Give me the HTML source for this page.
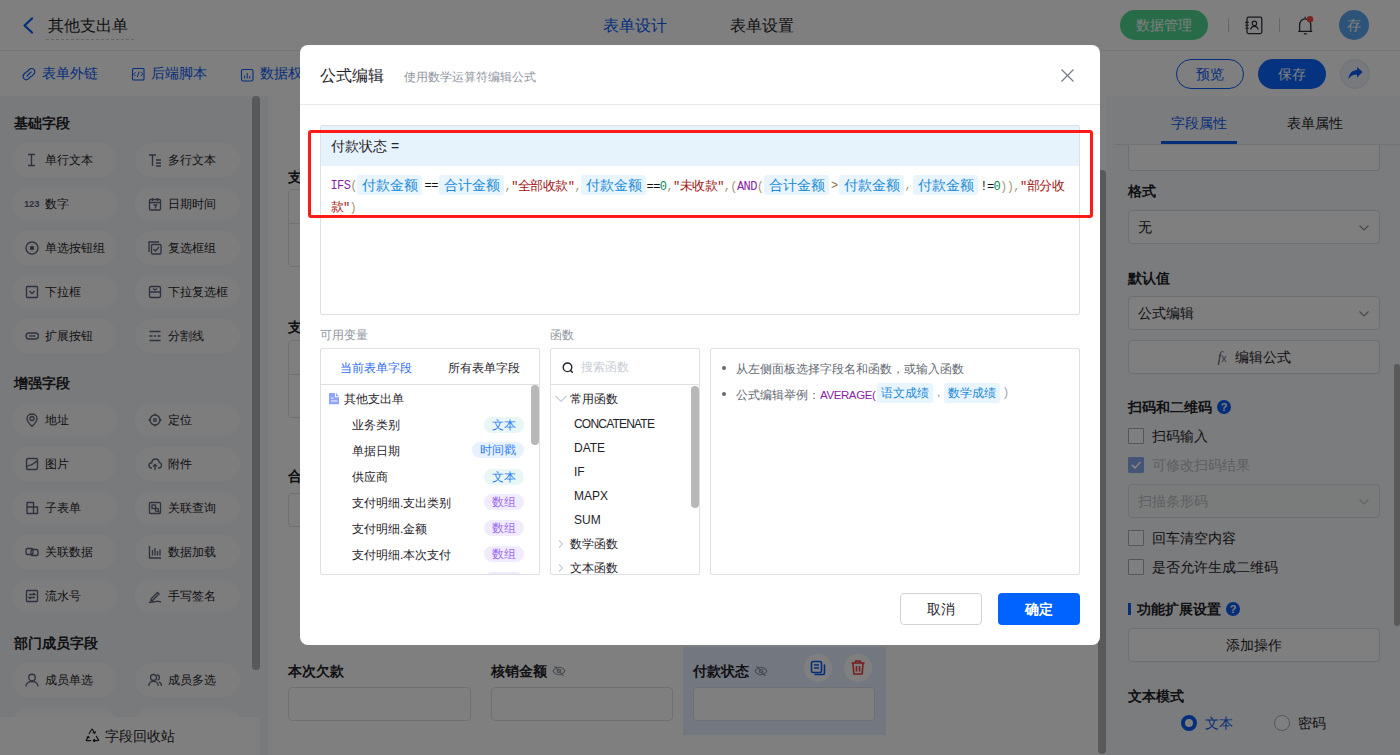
<!DOCTYPE html>
<html><head><meta charset="utf-8">
<style>
*{box-sizing:border-box;margin:0;padding:0}
html,body{width:1400px;height:755px;overflow:hidden;background:#fff;font-family:"Liberation Sans",sans-serif;color:#1f2329;font-size:14px}
.a{position:absolute;white-space:nowrap}
#page{position:absolute;left:0;top:0;width:1400px;height:755px}
#mask{position:absolute;left:0;top:0;width:1400px;height:755px;background:rgba(0,0,0,.5)}
#modal{position:absolute;left:300px;top:45px;width:800px;height:600px;background:#fff;border-radius:8px}
.mono{font-family:"Liberation Mono",monospace}
.fl{font-size:14px;font-weight:bold;color:#1f2329}
.inp{border:1px solid #dcdfe6;border-radius:4px;background:#fff}
.rl{font-size:14px;font-weight:bold;color:#1f2329}
.sel{width:252px;height:34px;border:1px solid #dcdfe6;border-radius:4px;background:#fff;padding-left:9px;font-size:14px;line-height:32px;color:#1f2329}
.chev{position:absolute;right:10px;top:14px}
.qm{width:14px;height:14px;border-radius:7px;background:#0a5cf5;color:#fff;font-size:11px;font-weight:bold;line-height:14px;text-align:center}
.cb{width:16px;height:16px;border:1px solid #a8adb8;border-radius:1px;background:#fff}
.chip{width:105px;height:34px;border-radius:17px;background:#fbfbfc}
.ct{font-size:12px;color:#1f2329}
.ic{stroke:#5b6478;fill:none;stroke-width:1.35}
.tg{height:20px;line-height:20px;padding:0 5px;background:#e8f4fe;color:#1a8ad6;font-size:14px;border-radius:3px;width:65px;text-align:center}
.fm{height:20px;line-height:20px;font-size:12px;letter-spacing:-0.6px;color:#000}
.fn{color:#8b1ea6}.pa{color:#a89878}.op{color:#111}.nu{color:#098658}.st{color:#a31515}.br{color:#8a6d3b}
.stc{color:#a31515;font-family:"Liberation Sans",sans-serif;font-size:13px;letter-spacing:-0.5px}
.tag{left:163px;width:40px;height:16px;line-height:16px;border-radius:8px;font-size:12px;text-align:center}
.tt{background:#e8f7f6;color:#2f7ff0}.tt2{background:#e8f1fe;color:#2f7ff0}.tp{background:#f1ecfd;color:#9d6cf0}
</style></head><body>
<div id="page">
  <!-- header -->
  <div class="a" style="left:0;top:0;width:1400px;height:51px;background:#fff;border-bottom:1px solid #ebedf0"></div>
  <svg class="a" style="left:22px;top:17px" width="12" height="17" viewBox="0 0 12 17"><path d="M10 1.5L2.5 8.5L10 15.5" stroke="#0a5cf5" stroke-width="2.2" fill="none" stroke-linecap="round" stroke-linejoin="round"/></svg>
  <div class="a" style="left:48px;top:16px;font-size:16px;color:#1f2329">其他支出单</div>
  <svg class="a" style="left:46px;top:39px" width="88" height="1"><line x1="0" y1="0.5" x2="88" y2="0.5" stroke="#c9cdd4" stroke-width="1" stroke-dasharray="3 2"/></svg>
  <div class="a" style="left:603px;top:16px;font-size:16px;color:#0a5cf5">表单设计</div>
  <div class="a" style="left:730px;top:16px;font-size:16px;color:#1f2329">表单设置</div>
  <div class="a" style="left:1120px;top:10px;width:88px;height:30px;border-radius:15px;background:#4fd692;color:#fff;font-size:14px;line-height:30px;text-align:center">数据管理</div>
  <div class="a" style="left:1228px;top:18px;width:1px;height:14px;background:#c9cdd4"></div>
  <svg class="a" style="left:1244px;top:16px" width="20" height="20" viewBox="0 0 20 20"><rect x="3" y="1.2" width="14.8" height="16.3" rx="1.5" stroke="#2b2f36" stroke-width="1.25" fill="none"/><path d="M1.2 6.4H4.8M1.2 9.3H4.8M1.2 12.3H4.8" stroke="#2b2f36" stroke-width="1.1"/><circle cx="10.4" cy="7.4" r="2.2" stroke="#2b2f36" stroke-width="1.2" fill="none"/><path d="M6.6 13.6C7 11.3 8.5 10.4 10.4 10.4S13.8 11.3 14.2 13.6" stroke="#2b2f36" stroke-width="1.2" fill="none"/></svg>
  <div class="a" style="left:1279px;top:18px;width:1px;height:14px;background:#c9cdd4"></div>
  <svg class="a" style="left:1296px;top:15px" width="20" height="20" viewBox="0 0 20 20"><path d="M8.6 2.3H9.8" stroke="#2b2f36" stroke-width="1.2"/><path d="M3.6 16.2V10.5C3.6 6.5 5.8 3.8 9.2 3.8S14.8 6.5 14.8 10.5V16.2M2.2 16.4H16.2" stroke="#2b2f36" stroke-width="1.3" fill="none" stroke-linejoin="round"/><path d="M7.8 18.8H10.8" stroke="#2b2f36" stroke-width="1.2"/><circle cx="14" cy="4.2" r="3.2" fill="#f54a45"/></svg>
  <div class="a" style="left:1339px;top:10px;width:30px;height:30px;border-radius:15px;background:#5aa6f0;color:#fff;font-size:14px;line-height:30px;text-align:center">存</div>
  <!-- toolbar -->
  <div class="a" style="left:0;top:51px;width:1400px;height:45px;background:#fff"></div>
  <svg class="a" style="left:22px;top:67px" width="14" height="14" viewBox="0 0 14 14"><path d="M5.2 4.6L7.3 2.5C8.6 1.2 10.7 1.2 11.9 2.4S13.1 5.8 11.8 7.1L9.6 9.3M8.6 9.6L6.6 11.6C5.3 12.9 3.2 12.9 2 11.7S0.8 8.3 2.1 7L4.2 4.9M4.9 9.1L9 5" stroke="#0a5cf5" stroke-width="1.2" fill="none" stroke-linecap="round"/></svg>
  <div class="a" style="left:42px;top:65px;font-size:14px;color:#0a5cf5">表单外链</div>
  <svg class="a" style="left:131px;top:67px" width="14" height="14" viewBox="0 0 14 14"><rect x="1.5" y="1.5" width="11.5" height="11.5" rx="1" stroke="#0a5cf5" stroke-width="1.1" fill="none"/><path d="M4.6 5.2L2.6 7.2L4.6 9.2M9.9 5.2L11.9 7.2L9.9 9.2M8.2 4.5L6.3 10" stroke="#0a5cf5" stroke-width="1" fill="none"/></svg>
  <div class="a" style="left:151px;top:65px;font-size:14px;color:#0a5cf5">后端脚本</div>
  <svg class="a" style="left:240px;top:68px" width="14" height="14" viewBox="0 0 14 14"><rect x="1.5" y="1.5" width="11.5" height="11.5" rx="1.5" stroke="#0a5cf5" stroke-width="1.1" fill="none"/><path d="M4.7 10.5V7.5M7.2 10.5V5M9.7 10.5V8" stroke="#0a5cf5" stroke-width="1"/></svg>
  <div class="a" style="left:260px;top:65px;font-size:14px;color:#0a5cf5">数据权限</div>
  <div class="a" style="left:1176px;top:59px;width:68px;height:30px;border:1px solid #0a5cf5;border-radius:15px;color:#0a5cf5;font-size:14px;line-height:28px;text-align:center">预览</div>
  <div class="a" style="left:1258px;top:59px;width:68px;height:30px;border-radius:15px;background:#0a66ff;color:#fff;font-size:14px;line-height:30px;text-align:center">保存</div>
  <div class="a" style="left:1340px;top:59px;width:30px;height:30px;border-radius:15px;background:#eef2fb;border:1px solid #dfe5f0"></div>
  <svg class="a" style="left:1347px;top:65px" width="17" height="17" viewBox="0 0 17 17"><path d="M15.5 7L10 2V5C5 5.3 2 8.5 1.5 14C3.5 11 6.5 9.5 10 9.6V12.5Z" fill="#0a5cf5"/></svg>
  <!-- left panel -->
  <div class="a" style="left:0;top:96px;width:268px;height:659px;background:#f3f4f7"></div>
  <div class="a" style="left:252px;top:96px;width:8px;height:574px;border-radius:4px;background:#b0b0b0"></div>
  <div class="a rl" style="left:14px;top:115px">基础字段</div>
  <div class="a rl" style="left:14px;top:375px">增强字段</div>
  <div class="a rl" style="left:14px;top:635px">部门成员字段</div>
  <div class="a chip" style="left:12px;top:143px"></div>
  <svg class="a ic" style="left:25px;top:153px" width="14" height="14" viewBox="0 0 14 14"><path d="M3 1.5H10M3 12.5H10M6.5 1.5V12.5"/></svg>
  <div class="a ct" style="left:45px;top:152px">单行文本</div>
  <div class="a chip" style="left:135px;top:143px"></div>
  <svg class="a ic" style="left:148px;top:153px" width="14" height="14" viewBox="0 0 14 14"><path d="M1 2H8M4.5 2V13M8 7H13M8 10H13M8 13H13" /></svg>
  <div class="a ct" style="left:168px;top:152px">多行文本</div>
  <div class="a chip" style="left:12px;top:187px"></div>
  <div class="a" style="left:24px;top:198px;font-size:9.5px;font-weight:bold;color:#5b6478;letter-spacing:-0.2px">123</div>
  <div class="a ct" style="left:45px;top:196px">数字</div>
  <div class="a chip" style="left:135px;top:187px"></div>
  <svg class="a ic" style="left:148px;top:197px" width="14" height="14" viewBox="0 0 14 14"><rect x="1.5" y="2.5" width="11" height="10.5" rx="1"/><path d="M1.5 5.5H12.5M4.5 1V4M9.5 1V4M5.5 8H8.5L7 11.5"/></svg>
  <div class="a ct" style="left:168px;top:196px">日期时间</div>
  <div class="a chip" style="left:12px;top:231px"></div>
  <svg class="a ic" style="left:25px;top:241px" width="14" height="14" viewBox="0 0 14 14"><circle cx="7" cy="7" r="6"/><circle cx="7" cy="7" r="1.6" fill="#5b6478"/></svg>
  <div class="a ct" style="left:45px;top:240px">单选按钮组</div>
  <div class="a chip" style="left:135px;top:231px"></div>
  <svg class="a ic" style="left:148px;top:241px" width="14" height="14" viewBox="0 0 14 14"><rect x="3.5" y="3.5" width="9.5" height="9.5" rx="1"/><path d="M1 11V1H11M5.5 8L7.5 10L11 6"/></svg>
  <div class="a ct" style="left:168px;top:240px">复选框组</div>
  <div class="a chip" style="left:12px;top:275px"></div>
  <svg class="a ic" style="left:25px;top:285px" width="14" height="14" viewBox="0 0 14 14"><rect x="1.5" y="1.5" width="11" height="11" rx="1"/><path d="M4.5 6L7 8.5L9.5 6"/></svg>
  <div class="a ct" style="left:45px;top:284px">下拉框</div>
  <div class="a chip" style="left:135px;top:275px"></div>
  <svg class="a ic" style="left:148px;top:285px" width="14" height="14" viewBox="0 0 14 14"><rect x="1.5" y="1.5" width="11" height="11" rx="1.5"/><path d="M1.5 7H12.5M5 3.5L7 5L9 3.5"/></svg>
  <div class="a ct" style="left:168px;top:284px">下拉复选框</div>
  <div class="a chip" style="left:12px;top:319px"></div>
  <svg class="a ic" style="left:25px;top:329px" width="14" height="14" viewBox="0 0 14 14"><rect x="1" y="4" width="12.5" height="6" rx="3"/><path d="M4 7H10.5"/></svg>
  <div class="a ct" style="left:45px;top:328px">扩展按钮</div>
  <div class="a chip" style="left:135px;top:319px"></div>
  <svg class="a ic" style="left:148px;top:329px" width="14" height="14" viewBox="0 0 14 14"><path d="M1.5 2.5H12.5M1.5 7H4.5M6 7H8M9.5 7H12.5M1.5 11.5H12.5"/></svg>
  <div class="a ct" style="left:168px;top:328px">分割线</div>
  <div class="a chip" style="left:12px;top:403px"></div>
  <svg class="a ic" style="left:25px;top:413px" width="14" height="14" viewBox="0 0 14 14"><path d="M7 13.5C7 13.5 2 8.5 2 5.5C2 2.8 4.2 1 7 1S12 2.8 12 5.5C12 8.5 7 13.5 7 13.5Z"/><circle cx="7" cy="5.5" r="2"/></svg>
  <div class="a ct" style="left:45px;top:412px">地址</div>
  <div class="a chip" style="left:135px;top:403px"></div>
  <svg class="a ic" style="left:148px;top:413px" width="14" height="14" viewBox="0 0 14 14"><circle cx="7" cy="7" r="5"/><circle cx="7" cy="7" r="1.4"/><path d="M7 0.5V2.5M7 11.5V13.5M0.5 7H2.5M11.5 7H13.5"/></svg>
  <div class="a ct" style="left:168px;top:412px">定位</div>
  <div class="a chip" style="left:12px;top:447px"></div>
  <svg class="a ic" style="left:25px;top:457px" width="14" height="14" viewBox="0 0 14 14"><rect x="1.5" y="1.5" width="11" height="11" rx="1.5"/><path d="M1.5 10C4 7 5.5 9 8 7S11 4.5 12.5 4M4 4.5V4.6"/></svg>
  <div class="a ct" style="left:45px;top:456px">图片</div>
  <div class="a chip" style="left:135px;top:447px"></div>
  <svg class="a ic" style="left:148px;top:457px" width="14" height="14" viewBox="0 0 14 14"><path d="M4 11H3.5C2 11 1 9.8 1 8.3S2.2 5.7 3.7 5.7C4 3.5 5.5 2 7.5 2S11 3.5 11.3 5.7C12.5 5.8 13.5 6.9 13.5 8.3S12.5 11 11 11H10M7 13V7.5M5 9.5L7 7.5L9 9.5"/></svg>
  <div class="a ct" style="left:168px;top:456px">附件</div>
  <div class="a chip" style="left:12px;top:491px"></div>
  <svg class="a ic" style="left:25px;top:501px" width="14" height="14" viewBox="0 0 14 14"><path d="M2 1.5H8.5V6H12.5V12.5H2ZM2 6H8.5V12.5"/></svg>
  <div class="a ct" style="left:45px;top:500px">子表单</div>
  <div class="a chip" style="left:135px;top:491px"></div>
  <svg class="a ic" style="left:148px;top:501px" width="14" height="14" viewBox="0 0 14 14"><rect x="1.5" y="1.5" width="11" height="11" rx="1"/><rect x="4" y="4" width="3.5" height="3.5"/><circle cx="8.8" cy="8.8" r="1.6"/><path d="M10 10L11.5 11.5"/></svg>
  <div class="a ct" style="left:168px;top:500px">关联查询</div>
  <div class="a chip" style="left:12px;top:535px"></div>
  <svg class="a ic" style="left:25px;top:545px" width="14" height="14" viewBox="0 0 14 14"><rect x="1" y="3.5" width="7" height="6" rx="1.5"/><rect x="6" y="4.5" width="7" height="6" rx="1.5"/></svg>
  <div class="a ct" style="left:45px;top:544px">关联数据</div>
  <div class="a chip" style="left:135px;top:535px"></div>
  <svg class="a ic" style="left:148px;top:545px" width="14" height="14" viewBox="0 0 14 14"><path d="M1.5 1V13H13M4.5 5V10.5M7 3V10.5M9.5 6V10.5M12 4.5V10.5"/></svg>
  <div class="a ct" style="left:168px;top:544px">数据加载</div>
  <div class="a chip" style="left:12px;top:579px"></div>
  <svg class="a ic" style="left:25px;top:589px" width="14" height="14" viewBox="0 0 14 14"><rect x="1.5" y="1.5" width="11" height="11" rx="1"/><path d="M4 5.5H10L8.3 4M10 8.5H4L5.7 10"/></svg>
  <div class="a ct" style="left:45px;top:588px">流水号</div>
  <div class="a chip" style="left:135px;top:579px"></div>
  <svg class="a ic" style="left:148px;top:589px" width="14" height="14" viewBox="0 0 14 14"><path d="M3 10L9.5 3.5L11 5L4.5 11.5H3V10ZM1 13.5C4 12.5 6 13.5 8 12.5C9.5 11.8 11 12.5 13 13"/></svg>
  <div class="a ct" style="left:168px;top:588px">手写签名</div>
  <div class="a chip" style="left:12px;top:663px"></div>
  <svg class="a ic" style="left:25px;top:673px" width="14" height="14" viewBox="0 0 14 14"><circle cx="7" cy="4.5" r="3.3"/><path d="M1 13.5C1 10.3 3.7 8.5 7 8.5S13 10.3 13 13.5"/></svg>
  <div class="a ct" style="left:45px;top:672px">成员单选</div>
  <div class="a chip" style="left:135px;top:663px"></div>
  <svg class="a ic" style="left:148px;top:673px" width="14" height="14" viewBox="0 0 14 14"><circle cx="5.5" cy="4.5" r="3"/><path d="M0.8 13C0.8 10.2 3 8.3 5.5 8.3S10.2 10.2 10.2 13M9 1.8C10.5 2 11.5 3.1 11.5 4.5C11.5 5.7 10.7 6.8 9.5 7.1M11 8.8C12.6 9.5 13.5 11 13.5 13"/></svg>
  <div class="a ct" style="left:168px;top:672px">成员多选</div>
  <div class="a chip" style="left:12px;top:707px"></div>
  <div class="a ct" style="left:45px;top:716px">部门单选</div>
  <div class="a chip" style="left:135px;top:707px"></div>
  <div class="a ct" style="left:168px;top:716px">部门多选</div>
  <div class="a" style="left:0;top:717px;width:260px;height:38px;background:#fff"></div>
  <svg class="a" style="left:85px;top:728px" width="15" height="14" viewBox="0 0 15 14"><path d="M4.2 5.5L6.8 1.2Q7 0.9 7.3 1.2L9.6 5M8.3 4.6L9.8 5.3L10.3 3.8M11.3 8.2L13.6 12.1Q13.8 12.6 13.2 12.6H8.2M9.6 11.3L8.2 12.6L9.6 13.8M5.6 12.6H1.6Q1 12.6 1.3 12.1L3.3 8.7M2.1 9.2L3.4 8.5L4.1 9.8" stroke="#1f2329" stroke-width="1.2" fill="none" stroke-linecap="round" stroke-linejoin="round"/></svg>
  <div class="a" style="left:105px;top:728px;font-size:14px;color:#1f2329">字段回收站</div>
  <!-- canvas -->
  <div class="a" style="left:268px;top:96px;width:832px;height:659px;background:#fff"></div>
  <div class="a fl" style="left:288px;top:168.8px">支付明细</div>
  <div class="a" style="left:288px;top:189px;width:400px;height:78px;border:1px solid #e0e2e6;border-radius:4px"></div>
  <div class="a" style="left:288px;top:223px;width:400px;height:1px;background:#e0e2e6"></div>
  <div class="a fl" style="left:288px;top:319px">支出明细</div>
  <div class="a" style="left:288px;top:340px;width:400px;height:78px;border:1px solid #e0e2e6;border-radius:4px"></div>
  <div class="a" style="left:288px;top:374px;width:400px;height:1px;background:#e0e2e6"></div>
  <div class="a fl" style="left:288px;top:468px">合计金额</div>
  <div class="a inp" style="left:288px;top:493px;width:182px;height:34px"></div>
  <div class="a fl" style="left:288px;top:663px">本次欠款</div>
  <div class="a inp" style="left:288px;top:687px;width:183px;height:34px"></div>
  <div class="a fl" style="left:491px;top:663px">核销金额</div>
  <svg class="a eye" style="left:552px;top:664px" width="14" height="14" viewBox="0 0 14 14"><path d="M1 7C2.5 4.5 4.5 3.3 7 3.3S11.5 4.5 13 7C11.5 9.5 9.5 10.7 7 10.7S2.5 9.5 1 7Z" stroke="#8f959e" stroke-width="1.1" fill="none"/><circle cx="7" cy="7" r="1.8" stroke="#8f959e" stroke-width="1.1" fill="none"/><path d="M2.5 2L11.5 12" stroke="#8f959e" stroke-width="1.1"/></svg>
  <div class="a inp" style="left:491px;top:687px;width:182px;height:34px"></div>
  <div class="a" style="left:683px;top:647px;width:203px;height:88px;background:#e7efff"></div>
  <div class="a fl" style="left:693px;top:663px">付款状态</div>
  <svg class="a eye" style="left:754px;top:664px" width="14" height="14" viewBox="0 0 14 14"><path d="M1 7C2.5 4.5 4.5 3.3 7 3.3S11.5 4.5 13 7C11.5 9.5 9.5 10.7 7 10.7S2.5 9.5 1 7Z" stroke="#8f959e" stroke-width="1.1" fill="none"/><circle cx="7" cy="7" r="1.8" stroke="#8f959e" stroke-width="1.1" fill="none"/><path d="M2.5 2L11.5 12" stroke="#8f959e" stroke-width="1.1"/></svg>
  <div class="a" style="left:804px;top:654px;width:28px;height:28px;border-radius:14px;background:#fff"></div>
  <svg class="a" style="left:810px;top:660px" width="16" height="16" viewBox="0 0 16 16"><rect x="1.5" y="1.5" width="10" height="11" rx="1.5" stroke="#0a5cf5" stroke-width="1.6" fill="none"/><path d="M4 5H9M4 8H9" stroke="#0a5cf5" stroke-width="1.5"/><path d="M14.5 4.5V13C14.5 14 14 14.5 13 14.5H4.5" stroke="#0a5cf5" stroke-width="1.6" fill="none"/></svg>
  <div class="a" style="left:844px;top:654px;width:28px;height:28px;border-radius:14px;background:#fff"></div>
  <svg class="a" style="left:850px;top:659px" width="16" height="17" viewBox="0 0 16 17"><path d="M1.5 4H14.5M5.5 4V2H10.5V4M3 4L3.8 15H12.2L13 4M6.5 7V12.5M9.5 7V12.5" stroke="#f03a3a" stroke-width="1.6" fill="none" stroke-linejoin="round"/></svg>
  <div class="a inp" style="left:693px;top:687px;width:182px;height:34px"></div>
  <!-- canvas scrollbar -->
  <div class="a" style="left:1098px;top:170px;width:8px;height:584px;border-radius:4px;background:#b2b2b2"></div>
  <!-- right panel -->
  <div class="a" style="left:1106px;top:96px;width:294px;height:659px;background:#f7f8fa"></div>
    <div class="a" style="left:1128px;top:136px;width:252px;height:35px;border:1px solid #dcdfe6;border-top:none;border-radius:0 0 4px 4px;background:#fff"></div>
  <div class="a" style="left:1114px;top:96px;width:286px;height:48px;background:#f7f8fa"></div>
  <div class="a" style="left:1114px;top:144px;width:286px;height:1px;background:#e5e6eb"></div>
  <div class="a" style="left:1161px;top:141px;width:76px;height:3px;background:#0a5cf5"></div>
  <div class="a" style="left:1171px;top:115px;font-size:14px;color:#0a5cf5">字段属性</div>
  <div class="a" style="left:1287px;top:115px;font-size:14px;color:#1f2329">表单属性</div>

  <div class="a rl" style="left:1128px;top:183px">格式</div>
  <div class="a sel" style="left:1128px;top:210px">无<svg class="chev" width="10" height="6" viewBox="0 0 10 6"><path d="M0.5 0.5L5 5L9.5 0.5" stroke="#8f959e" stroke-width="1.2" fill="none"/></svg></div>
  <div class="a rl" style="left:1128px;top:269.5px">默认值</div>
  <div class="a sel" style="left:1128px;top:296px">公式编辑<svg class="chev" width="10" height="6" viewBox="0 0 10 6"><path d="M0.5 0.5L5 5L9.5 0.5" stroke="#8f959e" stroke-width="1.2" fill="none"/></svg></div>
  <div class="a sel" style="left:1128px;top:340px;text-align:center;padding:0"><span style="font-family:'Liberation Serif',serif;font-style:italic;font-size:15px;color:#646a73">f</span><span style="font-size:10px;color:#646a73;margin-right:8px">x</span>编辑公式</div>
  <div class="a rl" style="left:1128px;top:399px">扫码和二维码</div>
  <div class="a qm" style="left:1217px;top:400px">?</div>
  <div class="a cb" style="left:1128px;top:428px"></div>
  <div class="a" style="left:1152px;top:428px;font-size:14px;color:#1f2329">扫码输入</div>
  <div class="a cb" style="left:1128px;top:457px;background:#8aaaf0;border-color:#8aaaf0"><svg width="14" height="14" viewBox="0 0 14 14" style="position:absolute;left:0;top:0"><path d="M3 7L6 10L11.5 4" stroke="#fff" stroke-width="1.8" fill="none"/></svg></div>
  <div class="a" style="left:1152px;top:457px;font-size:14px;color:#bbbfc4">可修改扫码结果</div>
  <div class="a sel" style="left:1128px;top:484px;background:#f5f6f7;color:#bbbfc4">扫描条形码<svg class="chev" width="10" height="6" viewBox="0 0 10 6"><path d="M0.5 0.5L5 5L9.5 0.5" stroke="#c9cdd4" stroke-width="1.2" fill="none"/></svg></div>
  <div class="a cb" style="left:1128px;top:530px"></div>
  <div class="a" style="left:1152px;top:530px;font-size:14px;color:#1f2329">回车清空内容</div>
  <div class="a cb" style="left:1128px;top:559px"></div>
  <div class="a" style="left:1152px;top:559px;font-size:14px;color:#1f2329">是否允许生成二维码</div>
  <div class="a" style="left:1128px;top:603px;width:3px;height:12px;background:#0a5cf5"></div>
  <div class="a rl" style="left:1137px;top:601px">功能扩展设置</div>
  <div class="a qm" style="left:1226px;top:602px">?</div>
  <div class="a sel" style="left:1128px;top:628px;text-align:center;padding:0">添加操作</div>
  <div class="a rl" style="left:1128px;top:687.5px">文本模式</div>
  <div class="a" style="left:1181px;top:715px;width:16px;height:16px;border-radius:8px;border:4px solid #0a5cf5;background:#fff"></div>
  <div class="a" style="left:1205px;top:715px;font-size:14px;color:#0a5cf5">文本</div>
  <div class="a" style="left:1274px;top:715px;width:16px;height:16px;border-radius:8px;border:1px solid #a8adb8;background:#fff"></div>
  <div class="a" style="left:1298px;top:715px;font-size:14px;color:#1f2329">密码</div>
  <div class="a" style="left:1394px;top:364px;width:6px;height:262px;border-radius:3px;background:#b2b2b2"></div>
</div>

<div id="mask"></div>
<div id="modal">
  <div class="a" style="left:20px;top:21px;font-size:16px;color:#1f2329">公式编辑</div>
  <div class="a" style="left:104px;top:24px;font-size:12px;color:#8f959e">使用数学运算符编辑公式</div>
  <svg class="a" style="left:761px;top:24px" width="13" height="13" viewBox="0 0 13 13"><path d="M0.5 0.5L12.5 12.5M12.5 0.5L0.5 12.5" stroke="#7a7f87" stroke-width="1.3" fill="none"/></svg>
  <div class="a" style="left:0;top:59px;width:800px;height:1px;background:#e8e8e8"></div>
  <!-- editor -->
  <div class="a" style="left:20px;top:80px;width:760px;height:190px;border:1px solid #dee0e3;border-radius:2px"></div>
  <div class="a" style="left:21px;top:81px;width:758px;height:40px;background:#e6f3fd"></div>
  <div class="a" style="left:31px;top:93px;font-size:14px;color:#1f2329">付款状态 =</div>
<div class="a mono fm" style="margin-top:1px;left:30.5px;top:130px"><span class="fn">IFS</span><span class="pa">(</span></div>
<div class="a tg" style="left:57.4px;top:130px">付款金额</div>
<div class="a mono fm" style="margin-top:1px;left:124.6px;top:130px"><span class="op">==</span></div>
<div class="a tg" style="left:139px;top:130px">合计金额</div>
<div class="a mono fm" style="margin-top:1px;left:204.6px;top:130px"><span class="pa">,</span><span class="st">"</span><span class="stc">全部收款</span><span class="st">"</span><span class="pa">,</span></div>
<div class="a tg" style="left:281px;top:130px">付款金额</div>
<div class="a mono fm" style="margin-top:1px;left:346.6px;top:130px"><span class="op">==</span><span class="nu">0</span><span class="pa">,</span><span class="st">"</span><span class="stc">未收款</span><span class="st">"</span><span class="pa">,(</span><span class="fn">AND</span><span class="pa">(</span></div>
<div class="a tg" style="left:464px;top:130px">合计金额</div>
<div class="a mono fm" style="margin-top:1px;left:531px;top:130px"><span class="br">></span></div>
<div class="a tg" style="left:539px;top:130px">付款金额</div>
<div class="a mono fm" style="margin-top:1px;left:604.6px;top:130px"><span class="pa">,</span></div>
<div class="a tg" style="left:613.4px;top:130px">付款金额</div>
<div class="a mono fm" style="margin-top:1px;left:680.3px;top:130px"><span class="op">!=</span><span class="nu">0</span><span class="pa">))</span><span class="pa">,</span><span class="st">"</span><span class="stc">部分收</span></div>
<div class="a mono fm" style="margin-top:1px;left:30.5px;top:151px"><span class="stc">款</span><span class="st">"</span><span class="pa">)</span></div>
  <!-- red annotation -->
  <div class="a" style="left:8px;top:85px;width:785px;height:88px;border:3px solid #ff1a1a;border-radius:3px"></div>
  <!-- labels -->
  <div class="a" style="left:20px;top:282px;font-size:12px;color:#8f959e">可用变量</div>
  <div class="a" style="left:250px;top:282px;font-size:12px;color:#8f959e">函数</div>
  <!-- var panel -->
  <div class="a" style="left:20px;top:303px;width:220px;height:227px;border:1px solid #dee0e3;border-radius:2px;overflow:hidden">
    <div class="a" style="left:0;top:35px;width:218px;height:1px;background:#dee0e3"></div>
    <div class="a" style="left:19px;top:10.7px;font-size:12px;color:#2f6bf6">当前表单字段</div>
    <div class="a" style="left:127px;top:10.7px;font-size:12px;color:#1f2329">所有表单字段</div>
    <svg class="a" style="left:8px;top:44px" width="10" height="12" viewBox="0 0 10 12"><path d="M0 0H6V4.2H10V11.2H0Z" fill="#8fa5ff"/><path d="M7 0L10 3.2H7Z" fill="#8fa5ff"/><path d="M2 5H4.5M2 8H8.5" stroke="#fff" stroke-width="0.9"/></svg>
    <div class="a" style="left:23px;top:41.5px;font-size:12px;color:#1f2329">其他支出单</div>
    <div class="a" style="left:31px;top:67.8px;font-size:12px;color:#1f2329">业务类别</div>
    <div class="a tag tt" style="top:68px">文本</div>
    <div class="a" style="left:31px;top:93.8px;font-size:12px;color:#1f2329">单据日期</div>
    <div class="a tag tt2" style="top:93px;left:151px;width:52px">时间戳</div>
    <div class="a" style="left:31px;top:119.8px;font-size:12px;color:#1f2329">供应商</div>
    <div class="a tag tt" style="top:120px">文本</div>
    <div class="a" style="left:31px;top:145.8px;font-size:12px;color:#1f2329">支付明细.支出类别</div>
    <div class="a tag tp" style="top:145px">数组</div>
    <div class="a" style="left:31px;top:171.8px;font-size:12px;color:#1f2329">支付明细.金额</div>
    <div class="a tag tp" style="top:171px">数组</div>
    <div class="a" style="left:31px;top:197.8px;font-size:12px;color:#1f2329">支付明细.本次支付</div>
    <div class="a tag tp" style="top:197px">数组</div>
    <div class="a tag tp" style="top:223px">数组</div>
    <div class="a" style="left:210px;top:36px;width:8px;height:60px;border-radius:4px;background:#b8b8b8"></div>
  </div>
  <!-- func panel -->
  <div class="a" style="left:250px;top:303px;width:150px;height:227px;border:1px solid #dee0e3;border-radius:2px;overflow:hidden">
    <div class="a" style="left:0;top:35px;width:148px;height:1px;background:#dee0e3"></div>
    <svg class="a" style="left:11px;top:13px" width="12" height="12" viewBox="0 0 12 12"><circle cx="5.5" cy="5.3" r="4.3" stroke="#1f2329" stroke-width="1.4" fill="none"/><path d="M8.6 8.4L10.3 10.2" stroke="#1f2329" stroke-width="1.5" stroke-linecap="round"/></svg>
    <div class="a" style="left:30px;top:10px;font-size:12px;color:#c9cdd4">搜索函数</div>
    <svg class="a" style="left:4px;top:46px" width="12" height="8" viewBox="0 0 12 8"><path d="M0.5 1L6 6.5L11.5 1" stroke="#c3cadb" stroke-width="1.1" fill="none"/></svg>
    <div class="a" style="left:19px;top:42px;font-size:12px;color:#1f2329">常用函数</div>
    <div class="a" style="left:23px;top:68px;font-size:12px;letter-spacing:-0.8px;color:#1f2329">CONCATENATE</div>
    <div class="a" style="left:23px;top:92px;font-size:12px;color:#1f2329">DATE</div>
    <div class="a" style="left:23px;top:116px;font-size:12px;color:#1f2329">IF</div>
    <div class="a" style="left:23px;top:140px;font-size:12px;color:#1f2329">MAPX</div>
    <div class="a" style="left:23px;top:164px;font-size:12px;color:#1f2329">SUM</div>
    <svg class="a" style="left:7px;top:191px" width="6" height="8" viewBox="0 0 6 8"><path d="M1 0.5L4.5 4L1 7.5" stroke="#c3cadb" stroke-width="1.1" fill="none"/></svg>
    <div class="a" style="left:19px;top:186.5px;font-size:12px;color:#1f2329">数学函数</div>
    <svg class="a" style="left:7px;top:215px" width="6" height="8" viewBox="0 0 6 8"><path d="M1 0.5L4.5 4L1 7.5" stroke="#c3cadb" stroke-width="1.1" fill="none"/></svg>
    <div class="a" style="left:19px;top:211px;font-size:12px;color:#1f2329">文本函数</div>
    <div class="a" style="left:140px;top:37px;width:8px;height:122px;border-radius:4px;background:#b8b8b8"></div>
  </div>
  <!-- info panel -->
  <div class="a" style="left:410px;top:303px;width:370px;height:227px;border:1px solid #dee0e3;border-radius:2px">
    <div class="a" style="left:11px;top:17px;width:4px;height:4px;border-radius:2px;background:#646a73"></div>
    <div class="a" style="left:25px;top:11.5px;font-size:12px;color:#646a73">从左侧面板选择字段名和函数，或输入函数</div>
    <div class="a" style="left:11px;top:43px;width:4px;height:4px;border-radius:2px;background:#646a73"></div>
    <div class="a" style="left:25px;top:37.5px;font-size:12px;color:#646a73">公式编辑举例：<span style="color:#8b1ea6;font-size:11.5px;letter-spacing:-0.4px">AVERAGE(</span></div>
    <div class="a" style="left:166px;top:34px;width:56px;height:20px;line-height:20px;border-radius:3px;background:#e8f4fe;color:#1a8ad6;font-size:12px;text-align:center">语文成绩</div>
    <div class="a" style="left:226px;top:36px;font-size:12px;color:#a0a0a0">,</div>
    <div class="a" style="left:233px;top:34px;width:56px;height:20px;line-height:20px;border-radius:3px;background:#e8f4fe;color:#1a8ad6;font-size:12px;text-align:center">数学成绩</div>
    <div class="a" style="left:293px;top:36px;font-size:12px;color:#a0a0a0">)</div>
  </div>
  <!-- footer -->
  <div class="a" style="left:600px;top:548px;width:82px;height:32px;border:1px solid #d0d3d6;border-radius:4px;font-size:14px;line-height:30px;text-align:center;color:#1f2329">取消</div>
  <div class="a" style="left:698px;top:548px;width:82px;height:32px;border-radius:4px;background:#0062ff;font-size:14px;font-weight:bold;line-height:32px;text-align:center;color:#fff">确定</div>
</div>
</body></html>
